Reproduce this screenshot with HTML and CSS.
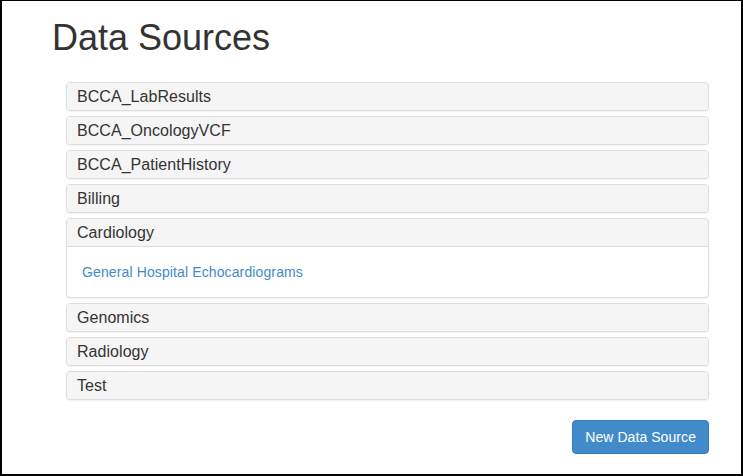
FILE: index.html
```html
<!DOCTYPE html>
<html>
<head>
<meta charset="utf-8">
<title>Data Sources</title>
<link rel="stylesheet" href="styles.css">
</head>
<body>
<div class="page">
  <h1 class="title">Data Sources</h1>
  <div class="panel-group">
    <div class="panel"><div class="panel-heading">BCCA_LabResults</div></div>
    <div class="panel"><div class="panel-heading">BCCA_OncologyVCF</div></div>
    <div class="panel"><div class="panel-heading">BCCA_PatientHistory</div></div>
    <div class="panel"><div class="panel-heading">Billing</div></div>
    <div class="panel">
      <div class="panel-heading open">Cardiology</div>
      <div class="panel-body"><a class="link" href="#">General Hospital Echocardiograms</a></div>
    </div>
    <div class="panel"><div class="panel-heading">Genomics</div></div>
    <div class="panel"><div class="panel-heading">Radiology</div></div>
    <div class="panel"><div class="panel-heading">Test</div></div>
  </div>
  <div class="actions">
    <button class="btn-primary" type="button">New Data Source</button>
  </div>
</div>
</body>
</html>
```

FILE: styles.css
```css
html, body {
  margin: 0;
  padding: 0;
}
body {
  width: 743px;
  height: 476px;
  box-sizing: border-box;
  border-top: 1px solid #000;
  border-left: 2px solid #000;
  border-right: 2px solid #000;
  border-bottom: 2px solid #000;
  background: #fff;
  font-family: "Liberation Sans", Arial, sans-serif;
  color: #333;
  overflow: hidden;
}
.page {
  padding: 0 32px 0 50px;
}
.title {
  margin: 17px 0 24px 0;
  font-size: 36px;
  font-weight: 500;
  line-height: 39.6px;
  color: #333;
}
.panel-group {
  margin-left: 14px;
  display: flex;
  flex-direction: column;
  gap: 5px;
  margin-bottom: 20px;
}
.panel {
  border: 1px solid #ddd;
  border-radius: 4px;
  background: #fff;
  box-shadow: 0 1px 1px rgba(0, 0, 0, 0.05);
  overflow: hidden;
}
.panel-heading {
  background: #f5f5f5;
  padding: 4px 10px;
  font-size: 16px;
  line-height: 19px;
  color: #333;
  letter-spacing: 0.05px;
}
.panel-heading.open {
  border-bottom: 1px solid #ddd;
}
.panel-body {
  padding: 15px;
  font-size: 14px;
  line-height: 20px;
}
.link {
  color: #428bca;
  text-decoration: none;
  letter-spacing: 0.12px;
}
.actions {
  display: flex;
  justify-content: flex-end;
}
.btn-primary {
  font-family: "Liberation Sans", Arial, sans-serif;
  font-size: 14px;
  line-height: 20px;
  padding: 6px 12px;
  color: #fff;
  background: #428bca;
  border: 1px solid #357ebd;
  border-radius: 4px;
  letter-spacing: 0.07px;
}
```
